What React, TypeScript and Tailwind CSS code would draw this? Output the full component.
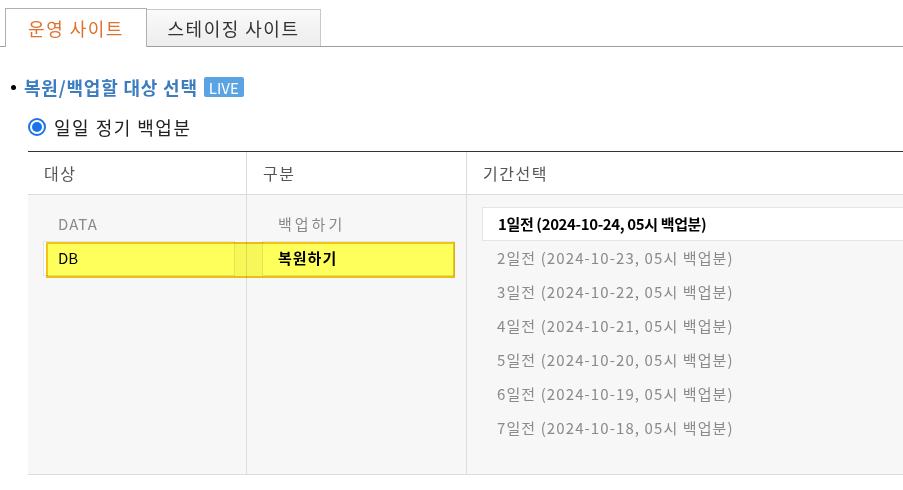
import { useState } from "react";

const periods = [
  "1일전 (2024-10-24, 05시 백업분)",
  "2일전 (2024-10-23, 05시 백업분)",
  "3일전 (2024-10-22, 05시 백업분)",
  "4일전 (2024-10-21, 05시 백업분)",
  "5일전 (2024-10-20, 05시 백업분)",
  "6일전 (2024-10-19, 05시 백업분)",
  "7일전 (2024-10-18, 05시 백업분)",
];

export default function App() {
  const [tab, setTab] = useState(0);
  const [period, setPeriod] = useState(0);

  return (
    <div className="w-[903px] h-[490px] overflow-hidden bg-white font-['Noto_Sans_CJK_KR','Noto_Sans',sans-serif] text-[#222]">
      {/* tabs */}
      <div className="pt-2 pl-[5px] flex items-end border-b border-[#a0a0a0]">
        <button
          onClick={() => setTab(0)}
          className={`w-[142px] h-[39px] -mb-px flex items-center justify-center text-[18px] tracking-[1.5px] border border-b-0 border-[#b0b0b0] ${
            tab === 0 ? "bg-white text-[#e0712c]" : "bg-[#f3f3f3] text-[#333]"
          }`}
        >
          운영 사이트
        </button>
        <button
          onClick={() => setTab(1)}
          className="w-[174px] h-[37px] flex items-center justify-center text-[18px] tracking-[1.5px] text-[#333] bg-gradient-to-b from-[#fafafa] to-[#ededed] border border-b-0 border-l-0 border-[#c8c8c8]"
        >
          스테이징 사이트
        </button>
      </div>

      {/* title */}
      <div className="mt-[28px] pl-[11px] flex items-center h-6">
        <span className="w-[5px] h-[5px] rounded-full bg-black mr-2" />
        <span className="text-[18px] font-bold text-[#3b7dc0] tracking-[0.8px]">
          복원/백업할 대상 선택
        </span>
        <span className="ml-[6px] h-5 px-[5px] flex items-center rounded-[2px] bg-[#5ba4e4] text-white text-[15px] leading-none">
          LIVE
        </span>
      </div>

      {/* radio */}
      <label className="mt-4 ml-[28px] flex items-center h-6 text-[18px] tracking-[1.5px] text-[#222]">
        <span className="w-[18px] h-[18px] rounded-full border-2 border-[#1a73e8] flex items-center justify-center mr-[8px]">
          <span className="w-[10px] h-[10px] rounded-full bg-[#1a73e8]" />
        </span>
        일일 정기 백업분
      </label>

      {/* table */}
      <div className="mt-3 ml-[28px] border-t border-[#333]">
        <div className="flex h-[43px] border-b border-[#dcdcdc] text-[16px] tracking-[1.5px] text-[#555]">
          <div className="w-[219px] pl-4 flex items-center border-r border-[#dcdcdc]">대상</div>
          <div className="w-[220px] pl-4 flex items-center border-r border-[#dcdcdc]">구분</div>
          <div className="flex-1 pl-4 flex items-center">기간선택</div>
        </div>

        <div className="relative flex h-[280px] bg-[#f7f7f7] border-b border-[#dcdcdc] text-[15px]">
          <div className="w-[219px] pt-3 pl-[15px] pr-[11px] border-r border-[#dcdcdc]">
            <div className="h-[34px] pl-[15px] flex items-center text-[#8a8a8a] tracking-[1px]">DATA</div>
            <div className="h-[35px] pl-[14px] flex items-center bg-white border border-[#e4e4e4] text-black">DB</div>
          </div>
          <div className="w-[220px] pt-3 pl-[15px] pr-[11px] border-r border-[#dcdcdc]">
            <div className="h-[34px] pl-4 flex items-center text-[#8a8a8a] tracking-[3px]">백업하기</div>
            <div className="h-[35px] pl-[15px] flex items-center bg-white border border-[#e4e4e4] font-bold text-black tracking-[1px]">
              복원하기
            </div>
          </div>
          <div className="flex-1 pt-3 pl-[15px]">
            {periods.map((p, i) => (
              <div
                key={p}
                onClick={() => setPeriod(i)}
                className={`h-[34px] pl-[15px] flex items-center cursor-pointer ${
                  period === i
                    ? "bg-white border border-r-0 border-[#e4e4e4] font-semibold text-black tracking-tight"
                    : "text-[#8a8a8a] tracking-[1.1px]"
                }`}
              >
                {p}
              </div>
            ))}
          </div>

          {/* highlight over the chosen row */}
          <div className="absolute left-[18px] top-[47px] w-[409px] h-[36px] bg-[#ffff5c] mix-blend-multiply border-2 border-[#f0c419]" />
        </div>
      </div>
    </div>
  );
}
